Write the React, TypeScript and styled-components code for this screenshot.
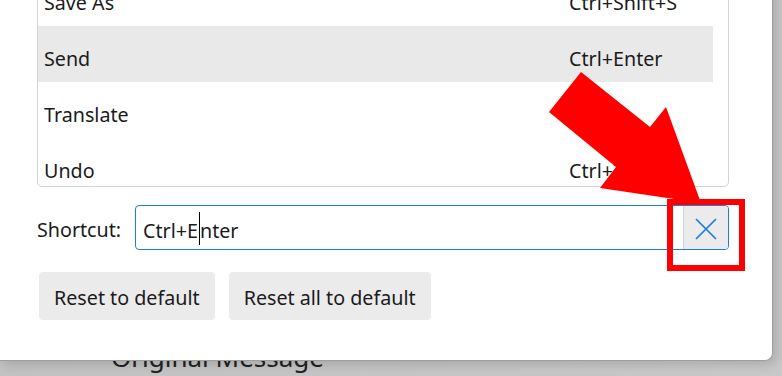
import React from 'react';
import styled, { createGlobalStyle } from 'styled-components';

const Global = createGlobalStyle`
  html, body { margin: 0; padding: 0; }
  body {
    width: 782px;
    height: 376px;
    overflow: hidden;
    font-family: "Noto Sans", "Open Sans", sans-serif;
    color: #1b1b1b;
  }
`;

const Stage = styled.div`
  position: relative;
  width: 782px;
  height: 376px;
  overflow: hidden;
  background: linear-gradient(90deg, #c2c2c2 0%, #c8c8c8 100%);
  display: flex;
  flex-direction: column;
  justify-content: flex-end;
`;

const BehindText = styled.div`
  padding-left: 111px;
  margin-bottom: 4px;
  font-size: 26px;
  line-height: 30px;
  color: #222;
`;

const Dialog = styled.div`
  position: absolute;
  left: 0;
  top: -60px;
  width: 773px;
  height: 421px;
  box-sizing: border-box;
  background: #fff;
  border-right: 1px solid #9e9e9e;
  border-bottom: 1px solid #9e9e9e;
  border-bottom-right-radius: 8px;
  box-shadow: 3px 3px 12px rgba(0, 0, 0, 0.16);
  padding: 29px 0 0 37px;
  display: flex;
  flex-direction: column;
`;

const List = styled.div`
  width: 692px;
  height: 218px;
  box-sizing: border-box;
  border: 1px solid #d3d3d3;
  border-radius: 0 0 5px 5px;
  overflow: hidden;
  padding-right: 15px;
`;

const Row = styled.div<{ $selected?: boolean }>`
  height: 56px;
  box-sizing: border-box;
  display: grid;
  grid-template-columns: 525px 1fr;
  align-items: center;
  padding: 8px 0 0 6px;
  font-size: 19.7px;
  background: ${(p) => (p.$selected ? '#e9e9e9' : 'transparent')};
`;

const Cell = styled.span`
  white-space: nowrap;
`;

const ShortcutRow = styled.div`
  margin-top: 18px;
  display: flex;
  align-items: center;
`;

const Label = styled.label`
  width: 98px;
  font-size: 19.7px;
  padding-top: 3px;
`;

const InputBox = styled.div`
  width: 594px;
  height: 45px;
  box-sizing: border-box;
  border: 1px solid #1b7ce6;
  border-radius: 4px;
  display: flex;
  overflow: hidden;
`;

const InputText = styled.div`
  flex: 1;
  display: flex;
  align-items: center;
  padding: 5px 0 0 7px;
  font-size: 19.7px;
  white-space: nowrap;
`;

const Caret = styled.span`
  display: inline-block;
  width: 1px;
  height: 33px;
  margin: 0 0 0 1px;
  background: #000;
  align-self: center;
  position: relative;
  top: -2px;
`;

const ClearButton = styled.button`
  width: 45px;
  border: none;
  border-left: 1px solid #d6d6d6;
  background: #ebebeb;
  display: flex;
  align-items: center;
  justify-content: center;
  padding: 2px 0 0 0;
  margin: 0;
`;

const ButtonRow = styled.div`
  margin-top: 22px;
  padding-left: 2px;
  display: flex;
  gap: 14px;
`;

const Button = styled.button`
  height: 48px;
  padding: 2px 15px 0;
  border: none;
  border-radius: 4px;
  background: #ebebeb;
  font-family: "Noto Sans", "Open Sans", sans-serif;
  font-size: 19.7px;
  color: #1b1b1b;
`;

const Annotation = styled.svg`
  position: absolute;
  left: 0;
  top: 0;
  pointer-events: none;
`;

const rows = [
  { name: 'Save As', key: 'Ctrl+Shift+S' },
  { name: 'Send', key: 'Ctrl+Enter', selected: true },
  { name: 'Translate', key: '' },
  { name: 'Undo', key: 'Ctrl+Z' },
];

export default function App() {
  return (
    <>
      <Global />
      <Stage>
        <BehindText>Original Message</BehindText>
        <Dialog>
          <List>
            {rows.map((r) => (
              <Row key={r.name} $selected={r.selected}>
                <Cell>{r.name}</Cell>
                <Cell>{r.key}</Cell>
              </Row>
            ))}
          </List>
          <ShortcutRow>
            <Label>Shortcut:</Label>
            <InputBox>
              <InputText>
                Ctrl+E
                <Caret />
                nter
              </InputText>
              <ClearButton aria-label="Clear">
                <svg width="22" height="22" viewBox="0 0 22 22">
                  <path d="M1 1 L21 21 M21 1 L1 21" stroke="#1b7ce6" strokeWidth="1.7" fill="none" />
                </svg>
              </ClearButton>
            </InputBox>
          </ShortcutRow>
          <ButtonRow>
            <Button>Reset to default</Button>
            <Button>Reset all to default</Button>
          </ButtonRow>
        </Dialog>
        <Annotation width="782" height="376" viewBox="0 0 782 376">
          <polygon points="581,72 549,112 616,167 600,188 701,203 666,107 650,127" fill="#ff0000" />
          <rect x="670" y="202" width="72" height="66" fill="none" stroke="#ff0000" strokeWidth="6" />
        </Annotation>
      </Stage>
    </>
  );
}
